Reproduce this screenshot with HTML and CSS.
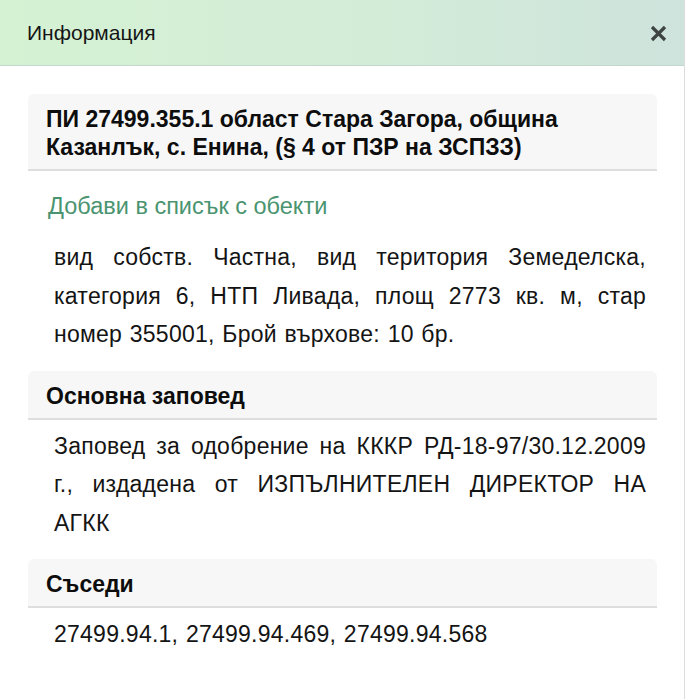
FILE: index.html
```html
<!DOCTYPE html>
<html lang="bg">
<head>
<meta charset="utf-8">
<title>Информация</title>
<link rel="stylesheet" href="styles.css">
</head>
<body>
<div class="dialog">
  <header class="dialog-head">
    <h1 class="dialog-title">Информация</h1>
    <button class="close" aria-label="Затвори">
      <svg width="17" height="17" viewBox="0 0 17 17"><path d="M2 2 L15 15 M15 2 L2 15" stroke="#3d4442" stroke-width="3.2" stroke-linecap="butt" fill="none"/></svg>
    </button>
  </header>
  <main class="dialog-body">
    <section class="card">
      <h2 class="card-head">ПИ 27499.355.1 област Стара Загора, община Казанлък, с. Енина, (§ 4 от ПЗР на ЗСПЗЗ)</h2>
      <a class="add-link" href="#">Добави в списък с обекти</a>
      <p class="card-text">вид собств. Частна, вид територия Земеделска, категория 6, НТП Ливада, площ 2773 кв. м, стар номер 355001, Брой върхове: 10 бр.</p>
    </section>
    <section class="card">
      <h2 class="card-head">Основна заповед</h2>
      <p class="card-text">Заповед за одобрение на КККР РД-18-97/30.12.2009 г., издадена от ИЗПЪЛНИТЕЛЕН ДИРЕКТОР НА АГКК</p>
    </section>
    <section class="card">
      <h2 class="card-head">Съседи</h2>
      <p class="card-text">27499.94.1, 27499.94.469, 27499.94.568</p>
    </section>
  </main>
</div>
</body>
</html>
```

FILE: styles.css
```css
html, body {
  margin: 0;
  padding: 0;
  background: #ffffff;
}
body {
  font-family: "Liberation Sans", Arial, sans-serif;
  color: #111;
}
.dialog {
  width: 685px;
  min-height: 699px;
  box-sizing: border-box;
  border-right: 1px solid #dcdcdc;
  background: #fff;
}
.dialog-head {
  height: 66px;
  box-sizing: border-box;
  border-bottom: 1px solid #c3d8cc;
  background: linear-gradient(to right, #d5f2d3 0%, #d3ecd8 55%, #cee3dc 100%);
  display: flex;
  align-items: center;
  justify-content: space-between;
  padding: 0 17px 0 27px;
}
.dialog-title {
  margin: 0;
  font-size: 21px;
  line-height: 24px;
  font-weight: normal;
  color: #151515;
  padding-top: 1px;
}
.close {
  border: 0;
  background: transparent;
  padding: 0;
  width: 17px;
  height: 17px;
  display: flex;
  margin-top: 1px;
}
.dialog-body {
  padding: 28px 27px 0 28px;
}
.card {
  display: flex;
  flex-direction: column;
  align-items: flex-start;
}
.card + .card {
  margin-top: 17px;
}
.card-head {
  align-self: stretch;
  margin: 0;
  background: #f7f7f7;
  border-radius: 6px 6px 0 0;
  border-bottom: 2px solid #dedede;
  padding: 11px 18px 8px 18px;
  font-size: 23px;
  line-height: 28px;
  font-weight: bold;
  color: #0d0d0d;
}
.add-link {
  margin: 21px 0 0 20px;
  font-size: 23.5px;
  line-height: 28px;
  color: #4a9470;
  text-decoration: none;
}
.card-text {
  align-self: stretch;
  margin: 18px 11px 0 26px;
  font-size: 23px;
  line-height: 38.5px;
  letter-spacing: 0.25px;
  word-spacing: 1px;
  text-align: justify;
  color: #141414;
}
.card-head + .card-text {
  margin-top: 7px;
}
```
